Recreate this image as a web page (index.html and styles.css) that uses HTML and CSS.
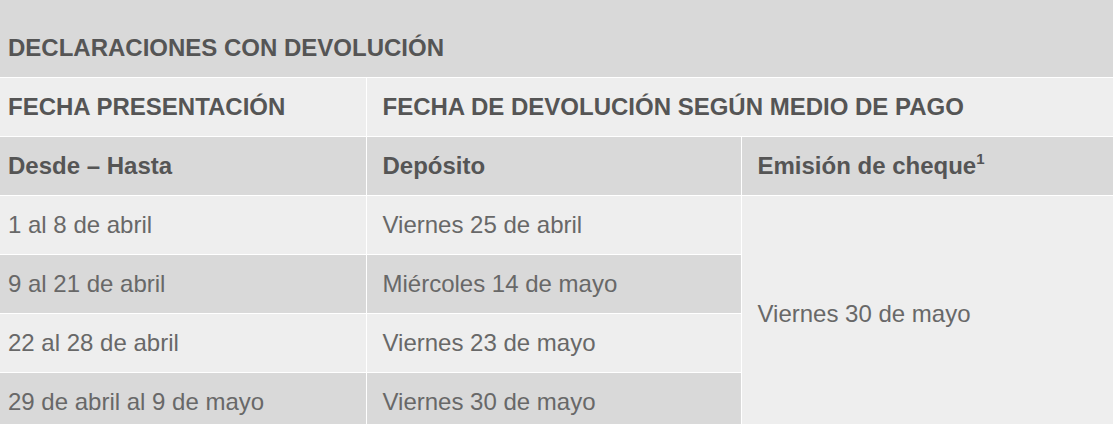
FILE: index.html
```html
<!DOCTYPE html>
<html lang="es">
<head>
<meta charset="utf-8">
<title>Declaraciones con devolución</title>
<link rel="stylesheet" href="styles.css">
</head>
<body>
<table class="tabla">
  <colgroup>
    <col class="c1">
    <col class="c2">
    <col class="c3">
  </colgroup>
  <tr class="titulo">
    <th colspan="3">DECLARACIONES CON DEVOLUCIÓN</th>
  </tr>
  <tr class="enc claro">
    <th>FECHA PRESENTACIÓN</th>
    <th colspan="2">FECHA DE DEVOLUCIÓN SEGÚN MEDIO DE PAGO</th>
  </tr>
  <tr class="sub oscuro">
    <th>Desde – Hasta</th>
    <th>Depósito</th>
    <th>Emisión de cheque<sup>1</sup></th>
  </tr>
  <tr class="claro">
    <td>1 al 8 de abril</td>
    <td>Viernes 25 de abril</td>
    <td rowspan="4" class="cheque">Viernes 30 de mayo</td>
  </tr>
  <tr class="oscuro">
    <td>9 al 21 de abril</td>
    <td>Miércoles 14 de mayo</td>
  </tr>
  <tr class="claro">
    <td>22 al 28 de abril</td>
    <td>Viernes 23 de mayo</td>
  </tr>
  <tr class="oscuro">
    <td>29 de abril al 9 de mayo</td>
    <td>Viernes 30 de mayo</td>
  </tr>
</table>
</body>
</html>
```
FILE: styles.css
```css
html, body {
  margin: 0;
  padding: 0;
  background: #ffffff;
}

.tabla {
  border-collapse: collapse;
  table-layout: fixed;
  width: 1129px;
  font-family: "Liberation Sans", Arial, sans-serif;
  font-size: 24px;
  line-height: 27px;
}

.c1 { width: 366px; }
.c2 { width: 375px; }
.c3 { width: 388px; }

.tabla th,
.tabla td {
  border: 1px solid #ffffff;
  padding: 0 16px;
  height: 59px;
  text-align: left;
  vertical-align: middle;
  box-sizing: border-box;
}

.tabla tr > :first-child {
  padding-left: 8px;
  border-left: none;
}

.tabla tr:first-child > th {
  border-top: none;
}

.tabla th {
  color: #555555;
  font-weight: bold;
}

.tabla td {
  color: #686868;
  font-weight: normal;
}

.titulo th {
  background: #d9d9d9;
  height: 77px;
  padding-top: 18px;
}

.claro th,
.claro td {
  background: #eeeeee;
}

.oscuro th,
.oscuro td {
  background: #d9d9d9;
}

.tabla td.cheque {
  background: #eeeeee;
}

sup {
  font-size: 15px;
  line-height: 0;
  vertical-align: 10px;
}
```
